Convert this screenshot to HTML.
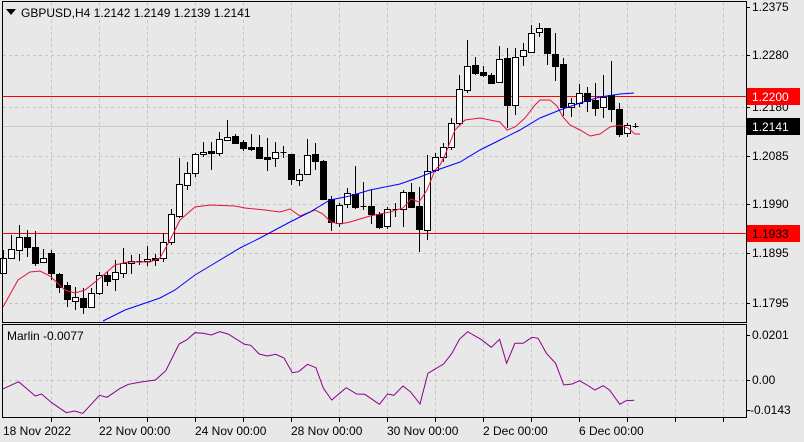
<!DOCTYPE html>
<html><head><meta charset="utf-8"><style>
html,body{margin:0;padding:0;background:#e8e8e8;width:804px;height:442px;overflow:hidden}
svg{display:block;font-family:"Liberation Sans",sans-serif;font-size:12px}
</style></head><body>
<svg id="s" width="804" height="442" viewBox="0 0 804 442" xmlns="http://www.w3.org/2000/svg">
<rect width="804" height="442" fill="#e8e8e8"/>
<g id="grid" stroke="#c4c4c4" stroke-dasharray="3,3" stroke-width="1"></g>
<line x1="2" y1="126.5" x2="746" y2="126.5" stroke="#c8c8c8"/>
<line x1="2" y1="96.5" x2="746" y2="96.5" stroke="#ff0000"/>
<line x1="2" y1="233.5" x2="746" y2="233.5" stroke="#ff0000"/>
<g id="cs"></g>
<polyline id="red" fill="none" stroke="#e8123c" stroke-width="1"/>
<polyline id="blue" fill="none" stroke="#0000ff" stroke-width="1"/>
<polyline id="mag" fill="none" stroke="#8b008b" stroke-width="1"/>
<rect x="2.5" y="1.5" width="744" height="321" fill="none" stroke="#000"/>
<rect x="2.5" y="324.5" width="744" height="93" fill="none" stroke="#000"/>
<polygon points="6,9 16,9 11,15" fill="#000"/>
<text x="21" y="17" fill="#000">GBPUSD,H4  1.2142 1.2149 1.2139 1.2141</text>
<text x="7" y="340" fill="#000">Marlin -0.0077</text>
<g fill="#000" id="axt">
<text x="752" y="11">1.2375</text>
<text x="752" y="59">1.2280</text>
<text x="752" y="111">1.2180</text>
<text x="752" y="160">1.2085</text>
<text x="752" y="208">1.1990</text>
<text x="752" y="257">1.1895</text>
<text x="752" y="307">1.1795</text>
<text x="752" y="339">0.0201</text>
<text x="752" y="384">0.00</text>
<text x="750" y="414">-0.0143</text>
</g>
<rect x="747" y="88" width="53" height="17" fill="#ff0000"/>
<text x="752" y="101" fill="#fff">1.2200</text>
<rect x="747" y="118" width="53" height="17" fill="#000"/>
<text x="752" y="131" fill="#fff">1.2141</text>
<rect x="747" y="225" width="53" height="17" fill="#ff0000"/>
<text x="752" y="238" fill="#000">1.1933</text>
<g fill="#000">
<text x="3" y="435">18 Nov 2022</text>
<text x="99" y="435">22 Nov 00:00</text>
<text x="195" y="435">24 Nov 00:00</text>
<text x="291" y="435">28 Nov 00:00</text>
<text x="387" y="435">30 Nov 00:00</text>
<text x="483" y="435">2 Dec 00:00</text>
<text x="579" y="435">6 Dec 00:00</text>
</g>
<g id="ticks" stroke="#000"></g>
</svg>
<script>
var NS="http://www.w3.org/2000/svg";
function el(p,t,a){var e=document.createElementNS(NS,t);for(var k in a)e.setAttribute(k,a[k]);p.appendChild(e);return e;}
var g=document.getElementById('grid');
var xs=[];for(var x=51;x<746;x+=48)xs.push(x);
xs.forEach(function(x){el(g,'line',{x1:x+.5,y1:2,x2:x+.5,y2:322});el(g,'line',{x1:x+.5,y1:325,x2:x+.5,y2:417});});
[55,107,156,204,253,303].forEach(function(y){el(g,'line',{x1:3,y1:y+.5,x2:746,y2:y+.5});});
el(g,'line',{x1:3,y1:380.5,x2:746,y2:380.5});
var t=document.getElementById('ticks');
[7,55,107,156,204,253,303,335,380,410].forEach(function(y){el(t,'line',{x1:747,y1:y+.5,x2:750,y2:y+.5});});
xs.forEach(function(x){el(t,'line',{x1:x+.5,y1:418,x2:x+.5,y2:422});});
// [hi,lo,bodyTop,bodyBot,white]
var C=[[250,273,258,273,1],[235,258,249,258,1],[225,261,237,250,1],[230,257,237,247,0],[231,266,247,263,0],[249,263,258,262,1],[250,280,253,273,0],[273,293,274,287,0],[282,307,285,299,0],[287,310,297,301,1],[288,314,298,307,0],[288,308,293,307,1],[272,295,275,293,1],[272,286,275,281,0],[260,291,272,279,1],[248,278,263,273,1],[255,274,261,263,1],[254,265,261,262,1],[246,266,259,261,1],[254,266,258,260,0],[233,262,242,258,1],[209,245,214,242,1],[158,218,184,216,1],[162,190,173,185,1],[153,177,154,173,1],[142,157,152,154,1],[142,170,151,153,0],[132,156,139,153,1],[120,141,137,140,1],[134,144,136,143,0],[140,151,142,148,0],[134,151,147,149,0],[135,159,147,158,0],[138,171,157,159,0],[142,167,152,158,1],[146,158,152,153,0],[154,185,154,179,0],[169,186,174,180,1],[139,175,155,174,1],[143,170,154,161,0],[160,200,161,199,0],[196,231,199,222,0],[203,227,205,223,1],[188,208,193,204,1],[166,209,194,207,0],[182,210,206,207,0],[190,224,206,214,0],[212,229,214,227,0],[207,229,209,226,1],[203,217,209,210,0],[190,227,192,209,1],[183,208,192,207,0],[187,252,206,229,0],[155,240,171,230,1],[153,172,157,170,1],[143,162,147,157,1],[118,150,123,147,1],[75,125,89,123,1],[40,93,66,90,1],[57,75,65,73,0],[66,77,72,75,0],[73,84,75,83,0],[46,83,59,82,1],[48,128,58,105,0],[48,115,57,105,1],[43,66,50,56,1],[25,53,33,52,1],[23,37,28,32,1],[28,65,28,53,0],[33,81,54,66,0],[58,116,64,107,0],[98,117,103,107,1],[84,107,93,103,1],[87,112,93,101,0],[83,116,100,108,0],[75,118,97,107,1],[61,122,95,109,0],[103,137,109,134,0],[123,137,125,133,1],[123,128,126,126,0]];
var cs=document.getElementById('cs');
C.forEach(function(c,i){var x=Math.round(3+8*i)+.5;
el(cs,'line',{x1:x,y1:c[0],x2:x,y2:c[1],stroke:'#000'});
var h=Math.max(c[3]-c[2],1);
if(h<=1){el(cs,'line',{x1:x-3,y1:c[2]+.5,x2:x+3,y2:c[2]+.5,stroke:'#000'});}
else el(cs,'rect',{x:x-3,y:c[2]+.5,width:6,height:h,fill:c[4]?'#fff':'#000',stroke:'#000'});});
function pl(id,pts){document.getElementById(id).setAttribute('points',pts.map(function(p){return p[0]+','+p[1]}).join(' '));}
pl('red',[[3,307],[18,280],[30,272],[40,271],[50,276],[65,290],[75,293],[85,290],[100,278],[115,265],[128,262],[150,262],[160,258],[170,240],[180,220],[195,207],[210,205],[235,206],[245,208],[265,210],[280,212],[290,209],[300,216],[310,212],[315,210],[323,214],[331,222],[340,224],[350,222],[370,216],[380,214],[390,212],[403,208],[411,199],[419,202],[427,190],[435,170],[440,165],[445,155],[455,130],[465,120],[480,118],[495,121],[500,122],[507,130],[515,127],[525,118],[535,105],[540,100],[550,100],[557,106],[563,117],[570,125],[580,130],[590,136],[600,134],[610,127],[620,125],[628,128],[635,134],[640,134]]);
pl('blue',[[103,321],[125,310],[160,298],[175,290],[195,275],[215,263],[240,248],[260,238],[290,222],[310,212],[330,200],[350,196],[370,190],[400,184],[420,177],[440,169],[460,162],[480,150],[500,140],[520,130],[540,118],[560,110],[580,103],[600,97],[620,94],[634,93]]);
var M=[[5,208],[45,185],[85,228],[100,222],[125,248],[160,278],[180,273],[200,280],[240,226],[258,232],[290,205],[310,193],[340,186],[375,180],[400,152],[432,72],[450,60],[470,38],[490,40],[510,45],[530,35],[550,42],[590,73],[605,76],[625,102],[645,108],[665,103],[685,114],[705,158],[720,155],[742,133],[762,143],[780,205],[800,240],[835,203],[860,222],[880,223],[915,253],[935,222],[950,226],[972,198],[990,215],[1013,252],[1032,160],[1070,132],[1090,100],[1108,58],[1128,35],[1160,58],[1185,82],[1205,58],[1222,130],[1242,70],[1262,70],[1283,52],[1298,55],[1318,100],[1340,130],[1360,195],[1380,192],[1398,182],[1420,198],[1435,210],[1455,197],[1470,210],[1495,253],[1510,242],[1530,241]];
pl('mag',M.map(function(p){return [(p[0]/2.412).toFixed(1),(320+p[1]/3).toFixed(1)];}));
</script>
</body></html>
